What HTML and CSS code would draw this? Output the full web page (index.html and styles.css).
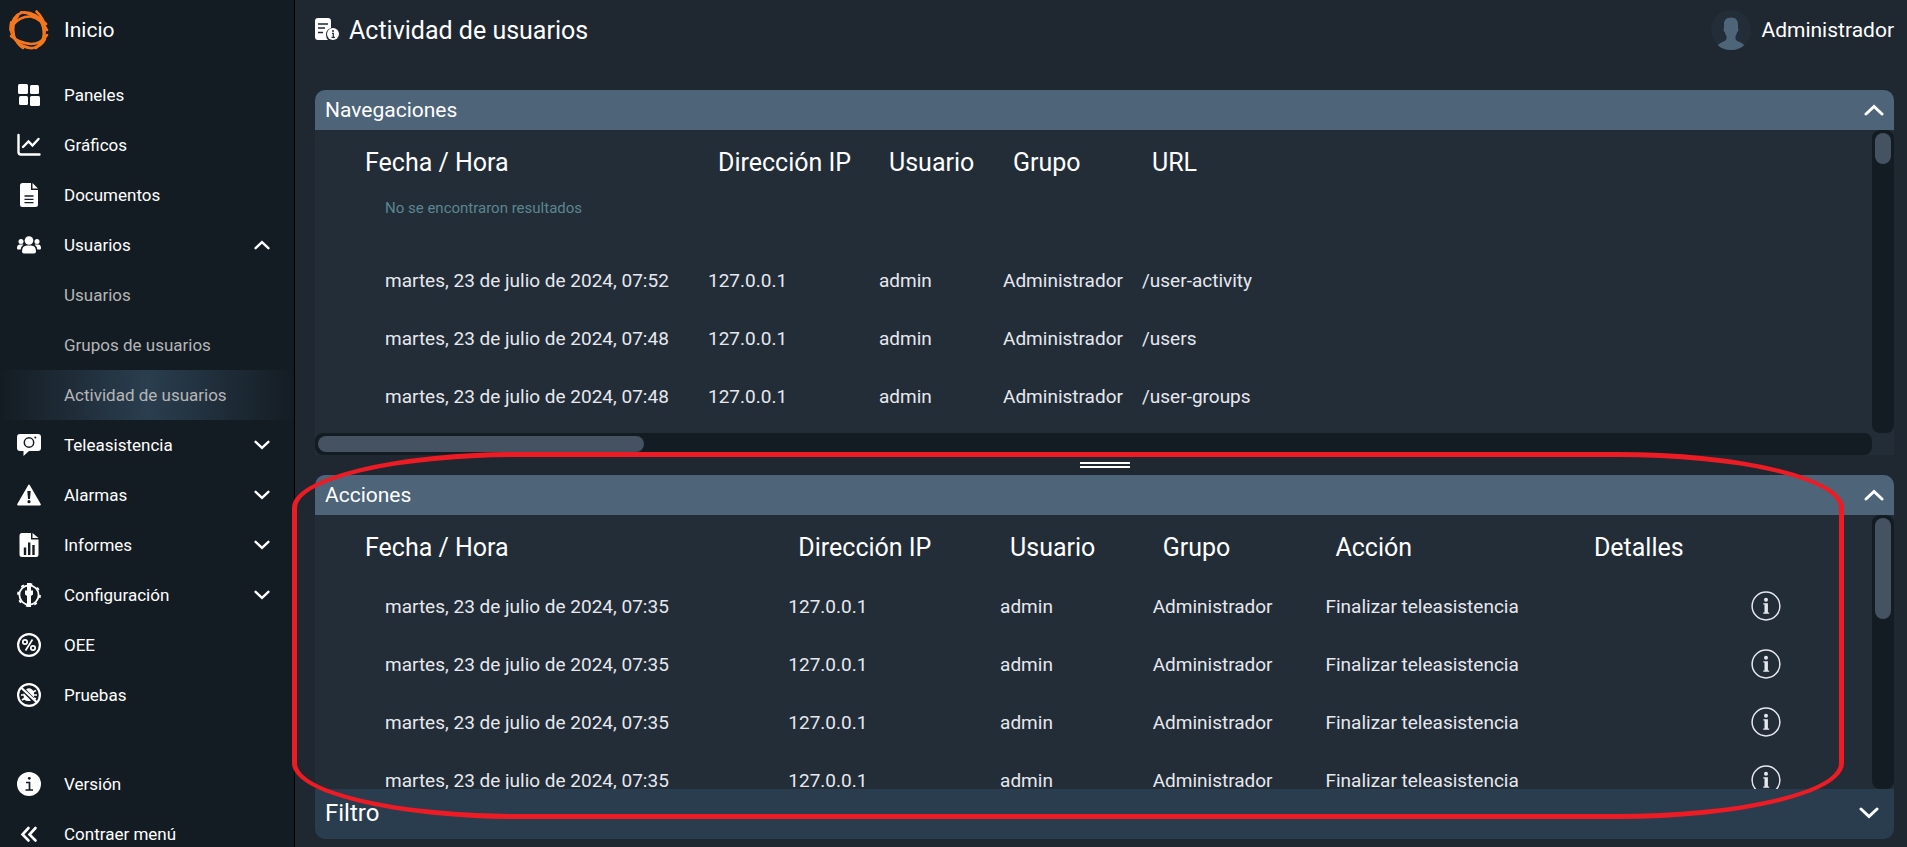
FILE: index.html
```html
<!DOCTYPE html>
<html lang="es">
<head>
<meta charset="utf-8">
<title>Actividad de usuarios</title>
<link rel="stylesheet" href="styles.css">
</head>
<body>
<svg class="sprite" aria-hidden="true">
  <symbol id="up" viewBox="0 0 20 12"><path d="M2 10 10 2.500 18 10" fill="none" stroke="currentColor" stroke-width="3" stroke-linecap="round"/></symbol>
  <symbol id="down" viewBox="0 0 20 12"><path d="M2 2 10 9.500 18 2" fill="none" stroke="currentColor" stroke-width="3" stroke-linecap="round"/></symbol>
  <symbol id="info" viewBox="0 0 30 30"><circle cx="15" cy="15" r="13.900" fill="none" stroke="currentColor" stroke-width="1.500"/><circle cx="15" cy="8.700" r="2" fill="currentColor"/><path d="M12.300 12.200h4.600v9.200h1.300v1.400h-6v-1.400h1.300v-7.800h-1.200z" fill="currentColor"/></symbol>
</svg>
<div class="app">
  <aside class="sidebar">
    <a class="brand" href="#">
      <svg class="brand-logo" viewBox="0 0 40 40" fill="none" stroke="#f4771f" stroke-width="2.600" stroke-linecap="round">
        <path d="M1.500 20Q3 6 13 2.500Q25 1 37 14"/>
        <path d="M27.500 1.500Q35 8 36 19Q36 30 27 38"/>
        <path d="M9 6Q2 14 5 26Q8 34 14 38"/>
        <path d="M2 26Q10 33 22 34Q32 34 38 25"/>
        <path d="M4 15Q11 6 22 6.500Q33 9 38 20"/>
        <path d="M7 30Q14 39 24 38Q33 36 36 29"/>
        <path d="M12 2Q24 4 31 11Q35 16 34.500 28" stroke-width="2"/>
        <path d="M2 12Q0 20 4 27Q9 35 19 37" stroke-width="2"/>
      </svg>
      <span>Inicio</span>
    </a>
    <nav class="menu">
      <a class="item" href="#"><svg class="ico" viewBox="0 0 24 24" fill="#fff"><rect x="1" y="1" width="10" height="10" rx="1.500"/><rect x="13" y="2" width="9" height="9" rx="1.500"/><rect x="2" y="13" width="9" height="9" rx="1.500"/><rect x="13" y="13" width="10" height="10" rx="1.500"/></svg><span>Paneles</span></a>
      <a class="item" href="#"><svg class="ico" viewBox="0 0 24 24" fill="none" stroke="#fff" stroke-width="2.400" stroke-linecap="round"><path d="M1.500 2V19Q1.500 21.500 4 21.500H22.500"/><path d="M6 14 11.500 8.500 15.500 12.500 21.500 6"/></svg><span>Gráficos</span></a>
      <a class="item" href="#"><svg class="ico" viewBox="0 0 24 24"><path fill="#fff" d="M6 0h8v7h7v14.500Q21 24 18.500 24h-13Q3 24 3 21.500V2.500Q3 0 5.500 0zM15.500 0 21 5.500h-5.500z"/><path d="M7.500 13h9M7.500 16.300h9M7.500 19.600h9" stroke="#141c23" stroke-width="1.300"/></svg><span>Documentos</span></a>
      <button class="item" type="button" aria-expanded="true"><svg class="ico" viewBox="0 0 24 24" fill="#fff"><circle cx="12" cy="7.500" r="4.300"/><circle cx="4" cy="8.500" r="2.500"/><circle cx="20" cy="8.500" r="2.500"/><path d="M5 18.500Q5 12.500 10 12.500h4q5 0 5 6 0 2-2 2H7q-2 0-2-2zM0 15q0-3.500 3-3.500h3.500Q4 13.500 3.600 16.500H1Q0 16.500 0 15zM24 15q0-3.500-3-3.500h-3.500Q20 13.500 20.400 16.500H23Q24 16.500 24 15z"/></svg><span>Usuarios</span><svg class="arrow"><use href="#up"/></svg></button>
      <a class="item sub" href="#">Usuarios</a>
      <a class="item sub" href="#">Grupos de usuarios</a>
      <a class="item sub active" href="#">Actividad de usuarios</a>
      <button class="item" type="button"><svg class="ico" viewBox="0 0 24 24"><path fill="#fff" d="M3 1h18q3 0 3 3v11q0 3-3 3H12l-5.500 5V18H3q-3 0-3-3V4q0-3 3-3z"/><circle cx="12" cy="9.500" r="4.700" fill="none" stroke="#141c23" stroke-width="1.500"/><circle cx="18.300" cy="4.500" r="1" fill="#141c23"/></svg><span>Teleasistencia</span><svg class="arrow"><use href="#down"/></svg></button>
      <button class="item" type="button"><svg class="ico" viewBox="0 0 24 24"><path fill="#fff" d="M11 2.500q1-2 2 0L23.700 21q.6 1.500-1 1.500H1.300q-1.600 0-1-1.500z"/><path fill="#141c23" d="M10.300 8h3.400L13 16h-2z"/><circle cx="12" cy="18.700" r="1.600" fill="#141c23"/></svg><span>Alarmas</span><svg class="arrow"><use href="#down"/></svg></button>
      <button class="item" type="button"><svg class="ico" viewBox="0 0 24 24"><path fill="#fff" d="M5 0h9v6.500h7.500V21.500Q21.500 24 19 24H5Q2.500 24 2.500 21.500v-19Q2.500 0 5 0zM15.500 0l6 5h-6z"/><path stroke="#141c23" stroke-width="2.400" d="M8 22v-7.500M12.200 22V9.500M16.500 22V12"/></svg><span>Informes</span><svg class="arrow"><use href="#down"/></svg></button>
      <button class="item" type="button"><svg class="ico" viewBox="0 0 24 24" fill="none" stroke="#fff"><circle cx="12" cy="12" r="9.600" stroke-width="1.800"/><circle cx="12" cy="12" r="11" stroke-width="1.800" stroke-dasharray="3 5.640"/><path d="M12 0v24" stroke-width="4"/><path d="M8 7.500h8v4l-2 1.500h-4l-2-1.500z" fill="#fff" stroke="none"/></svg><span>Configuración</span><svg class="arrow"><use href="#down"/></svg></button>
      <a class="item" href="#"><svg class="ico" viewBox="0 0 24 24" fill="none" stroke="#fff"><circle cx="12" cy="12" r="10.900" stroke-width="2.200"/><circle cx="8" cy="9" r="2.200" stroke-width="1.700"/><circle cx="16" cy="15" r="2.200" stroke-width="1.700"/><path d="M15.500 6.500 8.500 17.500" stroke-width="1.700"/></svg><span>OEE</span></a>
      <a class="item" href="#"><svg class="ico" viewBox="0 0 24 24" fill="none" stroke="#fff"><path d="M9 6.500q3-2.500 6 0l2 2v6l1 1zM6.500 10 14 17.500q-4 1.500-7-1z" fill="#fff" stroke="none"/><path d="M16 9l3-1.500M17 12h3M17 15l2 1M7 12H4M8 15l-3 2" stroke-width="1.600"/><circle cx="12" cy="12" r="10.900" stroke-width="2.200"/><path d="M4 4.500 20 19.500" stroke-width="2.200"/></svg><span>Pruebas</span></a>
    </nav>
    <div class="menu menu-end">
      <a class="item" href="#"><svg class="ico" viewBox="0 0 24 24"><circle cx="12" cy="12" r="12" fill="#fff"/><circle cx="12.300" cy="6.300" r="1.400" fill="#141c23"/><path d="M9 10.500h3.500v7.500M8.500 18h7.500" fill="none" stroke="#141c23" stroke-width="1.700"/></svg><span>Versión</span></a>
      <button class="item" type="button"><svg class="ico" viewBox="0 0 24 24" fill="none" stroke="#fff" stroke-width="2.600" stroke-linecap="round"><path d="M11.500 6 5.500 12.500 11.500 18.500M18.500 6 12.500 12.500 18.500 18.500"/></svg><span>Contraer menú</span></button>
    </div>
  </aside>
  <main class="main">
    <header class="top">
      <svg class="ico" viewBox="0 0 24 24"><path fill="#fff" d="M3 0h10q3 0 3 3v7q-5 1.500-5 6.500 0 3.500 2 5.500H3q-3 0-3-3V3q0-3 3-3z"/><path stroke="#1f2831" stroke-width="1.300" d="M3 6h10M3 10h7M3 14.500h5"/><circle cx="18" cy="16" r="6" fill="#fff"/><circle cx="18" cy="13" r="1" fill="#1f2831"/><path d="M17 15.300h1.300v4M16.500 19.300h3.400" fill="none" stroke="#1f2831" stroke-width="1.200"/></svg>
      <h1 class="title">Actividad de usuarios</h1>
      <button class="user" type="button">
        <svg class="avatar" viewBox="0 0 40 40"><circle cx="20" cy="20" r="20" fill="#222d38"/><path fill="#4d6479" d="M20 7.500c5 0 7.200 3 7 7.500v3.500c.6 0 .7 1 .2 2.200-.3 1-.7 1.300-1 1.300-.4 1.800-1 3-1.700 4v2.500c0 2 3 3 5 4 1.500.7 3 1.700 3.500 3A20 20 0 0 1 20 40a20 20 0 0 1-13-4.500c.5-1.300 2-2.300 3.500-3 2-1 5-2 5-4V26c-.7-1-1.300-2.200-1.700-4-.3 0-.7-.3-1-1.300-.5-1.200-.4-2.200.2-2.200V15c-.2-4.500 2-7.500 7-7.500z"/></svg>
        <span>Administrador</span>
      </button>
    </header>
    <div class="panels">
      <section class="panel nav-panel">
        <button class="panel-head" type="button"><span>Navegaciones</span><svg class="arrow wide"><use href="#up"/></svg></button>
        <div class="body">
          <div class="view">
            <table class="grid nav-grid">
              <colgroup><col class="n1"><col class="n2"><col class="n3"><col class="n4"><col></colgroup>
              <thead><tr><th>Fecha / Hora</th><th>Dirección IP</th><th>Usuario</th><th>Grupo</th><th>URL</th></tr></thead>
              <tbody>
                <tr class="empty"><td colspan="5">No se encontraron resultados</td></tr>
                <tr><td>martes, 23 de julio de 2024, 07:52</td><td>127.0.0.1</td><td>admin</td><td>Administrador</td><td>/user-activity</td></tr>
                <tr><td>martes, 23 de julio de 2024, 07:48</td><td>127.0.0.1</td><td>admin</td><td>Administrador</td><td>/users</td></tr>
                <tr><td>martes, 23 de julio de 2024, 07:48</td><td>127.0.0.1</td><td>admin</td><td>Administrador</td><td>/user-groups</td></tr>
              </tbody>
            </table>
          </div>
          <div class="bar bar-v"><div class="thumb short"></div></div>
          <div class="bar bar-h"><div class="thumb long"></div></div>
        </div>
      </section>
      <div class="splitter"><div class="grip"></div></div>
      <section class="panel act-panel">
        <button class="panel-head" type="button"><span>Acciones</span><svg class="arrow wide"><use href="#up"/></svg></button>
        <div class="body">
          <div class="view">
            <table class="grid act-grid">
              <colgroup><col class="a1"><col class="a2"><col class="a3"><col class="a4"><col class="a5"><col></colgroup>
              <thead><tr><th>Fecha / Hora</th><th>Dirección IP</th><th>Usuario</th><th>Grupo</th><th>Acción</th><th>Detalles</th></tr></thead>
              <tbody>
                <tr><td>martes, 23 de julio de 2024, 07:35</td><td>127.0.0.1</td><td>admin</td><td>Administrador</td><td>Finalizar teleasistencia</td><td class="detail"><button class="info" type="button" aria-label="Detalles"><svg><use href="#info"/></svg></button></td></tr>
                <tr><td>martes, 23 de julio de 2024, 07:35</td><td>127.0.0.1</td><td>admin</td><td>Administrador</td><td>Finalizar teleasistencia</td><td class="detail"><button class="info" type="button" aria-label="Detalles"><svg><use href="#info"/></svg></button></td></tr>
                <tr><td>martes, 23 de julio de 2024, 07:35</td><td>127.0.0.1</td><td>admin</td><td>Administrador</td><td>Finalizar teleasistencia</td><td class="detail"><button class="info" type="button" aria-label="Detalles"><svg><use href="#info"/></svg></button></td></tr>
                <tr><td>martes, 23 de julio de 2024, 07:35</td><td>127.0.0.1</td><td>admin</td><td>Administrador</td><td>Finalizar teleasistencia</td><td class="detail"><button class="info" type="button" aria-label="Detalles"><svg><use href="#info"/></svg></button></td></tr>
              </tbody>
            </table>
          </div>
          <div class="bar bar-v"><div class="thumb medium"></div></div>
        </div>
      </section>
      <button class="filter" type="button"><span>Filtro</span><svg class="arrow wide"><use href="#down"/></svg></button>
    </div>
  </main>
  <div class="highlight"></div>
</div>
</body>
</html>
```
FILE: styles.css
```css
* { box-sizing: border-box; }
body {
  margin: 0;
  background: #1f2831;
  color: #fff;
  font-family: Roboto, "Liberation Sans", sans-serif;
  font-size: 19px;
}
a { color: inherit; text-decoration: none; }
button {
  border: 0;
  margin: 0;
  padding: 0;
  background: none;
  color: inherit;
  font: inherit;
  text-align: left;
  cursor: pointer;
}
.sprite { display: none; }
.app {
  position: relative;
  display: flex;
  height: 100vh;
  overflow: hidden;
}
.sidebar {
  flex: none;
  width: 295px;
  background: #141c23;
  border-right: 1px solid #000;
  overflow: hidden;
}
.brand {
  display: flex;
  align-items: center;
  gap: 15px;
  height: 60px;
  padding-left: 9px;
  font-size: 21px;
}
.brand-logo { width: 40px; height: 40px; }
.menu {
  display: flex;
  flex-direction: column;
  margin-top: 10px;
}
.menu-end { margin-top: 39px; }
.item {
  display: flex;
  align-items: center;
  gap: 23px;
  height: 50px;
  padding: 0 24px 0 17px;
  font-size: 17px;
}
.sub {
  padding-left: 64px;
  color: #b4b6b8;
}
.active { background: linear-gradient(90deg, #141c23, #2a3e4f 50%, #141c23); }
.ico { flex: none; width: 24px; height: 24px; }
.arrow { flex: none; width: 16px; height: 10px; margin-left: auto; }
.arrow.wide { width: 20px; height: 12px; }
.main {
  flex: 1;
  min-width: 0;
  display: flex;
  flex-direction: column;
  padding: 0 13px 8px 20px;
}
.top {
  display: flex;
  align-items: center;
  gap: 10px;
  height: 60px;
}
.title { margin: 0; font-size: 25px; font-weight: 400; }
.user {
  display: flex;
  align-items: center;
  gap: 10px;
  margin-left: auto;
  font-size: 21px;
}
.avatar { width: 40px; height: 40px; }
.panels {
  flex: 1;
  min-height: 0;
  display: flex;
  flex-direction: column;
  margin-top: 30px;
}
.panel {
  display: flex;
  flex-direction: column;
  min-height: 0;
  background: #222d38;
  border-radius: 10px 10px 0 0;
}
.nav-panel { flex: 365; }
.act-panel { flex: 314; }
.panel-head {
  flex: none;
  display: flex;
  align-items: center;
  height: 40px;
  padding: 0 10px;
  background: #4d6479;
  border-radius: 10px 10px 0 0;
  font-size: 21px;
}
.body {
  flex: 1;
  min-height: 0;
  display: grid;
  grid-template-columns: minmax(0, 1fr) 22px;
  grid-template-rows: minmax(0, 1fr) auto;
}
.view { overflow: hidden; }
.bar {
  display: flex;
  padding: 3px;
  background: #141c23;
  border-radius: 8px;
}
.bar-v { flex-direction: column; }
.bar-h { height: 22px; }
.thumb { background: #445261; border-radius: 8px; }
.short { height: 31px; }
.medium { height: 101px; }
.long { width: 21%; }
.grid {
  width: 100%;
  table-layout: fixed;
  border-collapse: collapse;
  white-space: nowrap;
}
.grid th {
  height: 62px;
  padding: 3px 0 0 10px;
  font-size: 25px;
  font-weight: 400;
  text-align: left;
}
.grid td { height: 58px; padding: 0; color: #e6e8ee; }
.grid th:first-child { padding-left: 50px; }
.grid td:first-child { padding-left: 70px; }
.grid .empty td {
  height: 59px;
  padding-top: 7px;
  vertical-align: top;
  color: #5c868f;
  font-size: 15px;
}
.n1 { width: 393px; }
.n2 { width: 171px; }
.n3 { width: 124px; }
.n4 { width: 139px; }
.a1 { width: 30.4%; }
.a2 { width: 13.6%; }
.a3 { width: 9.8%; }
.a4 { width: 11.1%; }
.a5 { width: 16.6%; }
.grid .detail { padding-right: 91px; text-align: right; }
.info { display: inline-block; width: 30px; height: 30px; vertical-align: middle; }
.info svg { display: block; width: 30px; height: 30px; }
.splitter {
  flex: none;
  display: flex;
  justify-content: center;
  height: 20px;
  padding-top: 7px;
}
.grip {
  width: 50px;
  height: 6px;
  border-top: 2px solid #fff;
  border-bottom: 2px solid #fff;
}
.filter {
  flex: none;
  display: flex;
  align-items: center;
  height: 50px;
  padding: 0 15px 3px 10px;
  background: #293d4e;
  border-radius: 0 0 10px 10px;
  font-size: 24px;
}
.highlight {
  position: absolute;
  inset: 452px 63px 28px 292px;
  border: 5px solid #ed1c24;
  border-radius: 227px / 56px;
  pointer-events: none;
}
```
